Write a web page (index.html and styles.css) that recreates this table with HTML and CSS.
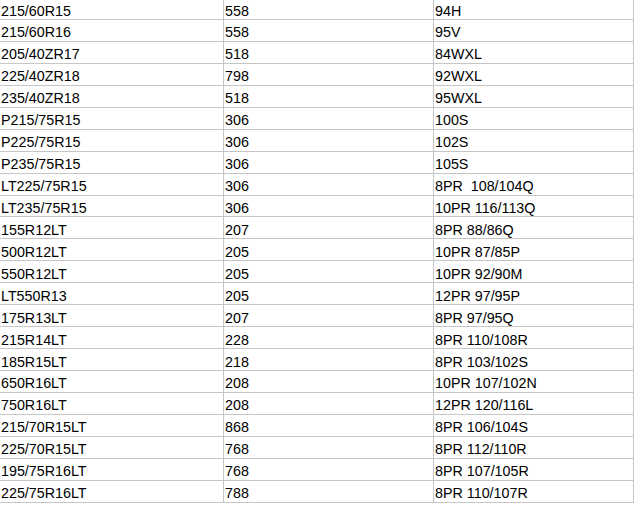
FILE: index.html
```html
<!DOCTYPE html>
<html>
<head>
<meta charset="utf-8">
<link rel="stylesheet" href="styles.css">
</head>
<body>
<div class="sheet">
<div class="c">215/60R15</div><div class="c">558</div><div class="c">94H</div>
<div class="c">215/60R16</div><div class="c">558</div><div class="c">95V</div>
<div class="c">205/40ZR17</div><div class="c">518</div><div class="c">84WXL</div>
<div class="c">225/40ZR18</div><div class="c">798</div><div class="c">92WXL</div>
<div class="c">235/40ZR18</div><div class="c">518</div><div class="c">95WXL</div>
<div class="c">P215/75R15</div><div class="c">306</div><div class="c">100S</div>
<div class="c">P225/75R15</div><div class="c">306</div><div class="c">102S</div>
<div class="c">P235/75R15</div><div class="c">306</div><div class="c">105S</div>
<div class="c">LT225/75R15</div><div class="c">306</div><div class="c">8PR&nbsp; 108/104Q</div>
<div class="c">LT235/75R15</div><div class="c">306</div><div class="c">10PR 116/113Q</div>
<div class="c">155R12LT</div><div class="c">207</div><div class="c">8PR 88/86Q</div>
<div class="c">500R12LT</div><div class="c">205</div><div class="c">10PR 87/85P</div>
<div class="c">550R12LT</div><div class="c">205</div><div class="c">10PR 92/90M</div>
<div class="c">LT550R13</div><div class="c">205</div><div class="c">12PR 97/95P</div>
<div class="c">175R13LT</div><div class="c">207</div><div class="c">8PR 97/95Q</div>
<div class="c">215R14LT</div><div class="c">228</div><div class="c">8PR 110/108R</div>
<div class="c">185R15LT</div><div class="c">218</div><div class="c">8PR 103/102S</div>
<div class="c">650R16LT</div><div class="c">208</div><div class="c">10PR 107/102N</div>
<div class="c">750R16LT</div><div class="c">208</div><div class="c">12PR 120/116L</div>
<div class="c">215/70R15LT</div><div class="c">868</div><div class="c">8PR 106/104S</div>
<div class="c">225/70R15LT</div><div class="c">768</div><div class="c">8PR 112/110R</div>
<div class="c">195/75R16LT</div><div class="c">768</div><div class="c">8PR 107/105R</div>
<div class="c">225/75R16LT</div><div class="c">788</div><div class="c">8PR 110/107R</div>
</div>
</body>
</html>
```
FILE: styles.css
```css
html, body {
  margin: 0;
  padding: 0;
  background: #fff;
}
body {
  font-family: "Liberation Sans", Arial, sans-serif;
  font-size: 14.3px;
  color: #000;
  overflow: hidden;
}
.sheet {
  display: grid;
  grid-template-columns: 224px 210px 200px;
  grid-auto-rows: 21.95px;
  margin-top: -1.95px;
}
.c {
  box-sizing: border-box;
  border-right: 1px solid #c6c6c6;
  border-bottom: 1px solid #c6c6c6;
  padding-left: 1px;
  padding-bottom: 0.5px;
  display: flex;
  align-items: flex-end;
  white-space: pre;
  line-height: normal;
}
```
